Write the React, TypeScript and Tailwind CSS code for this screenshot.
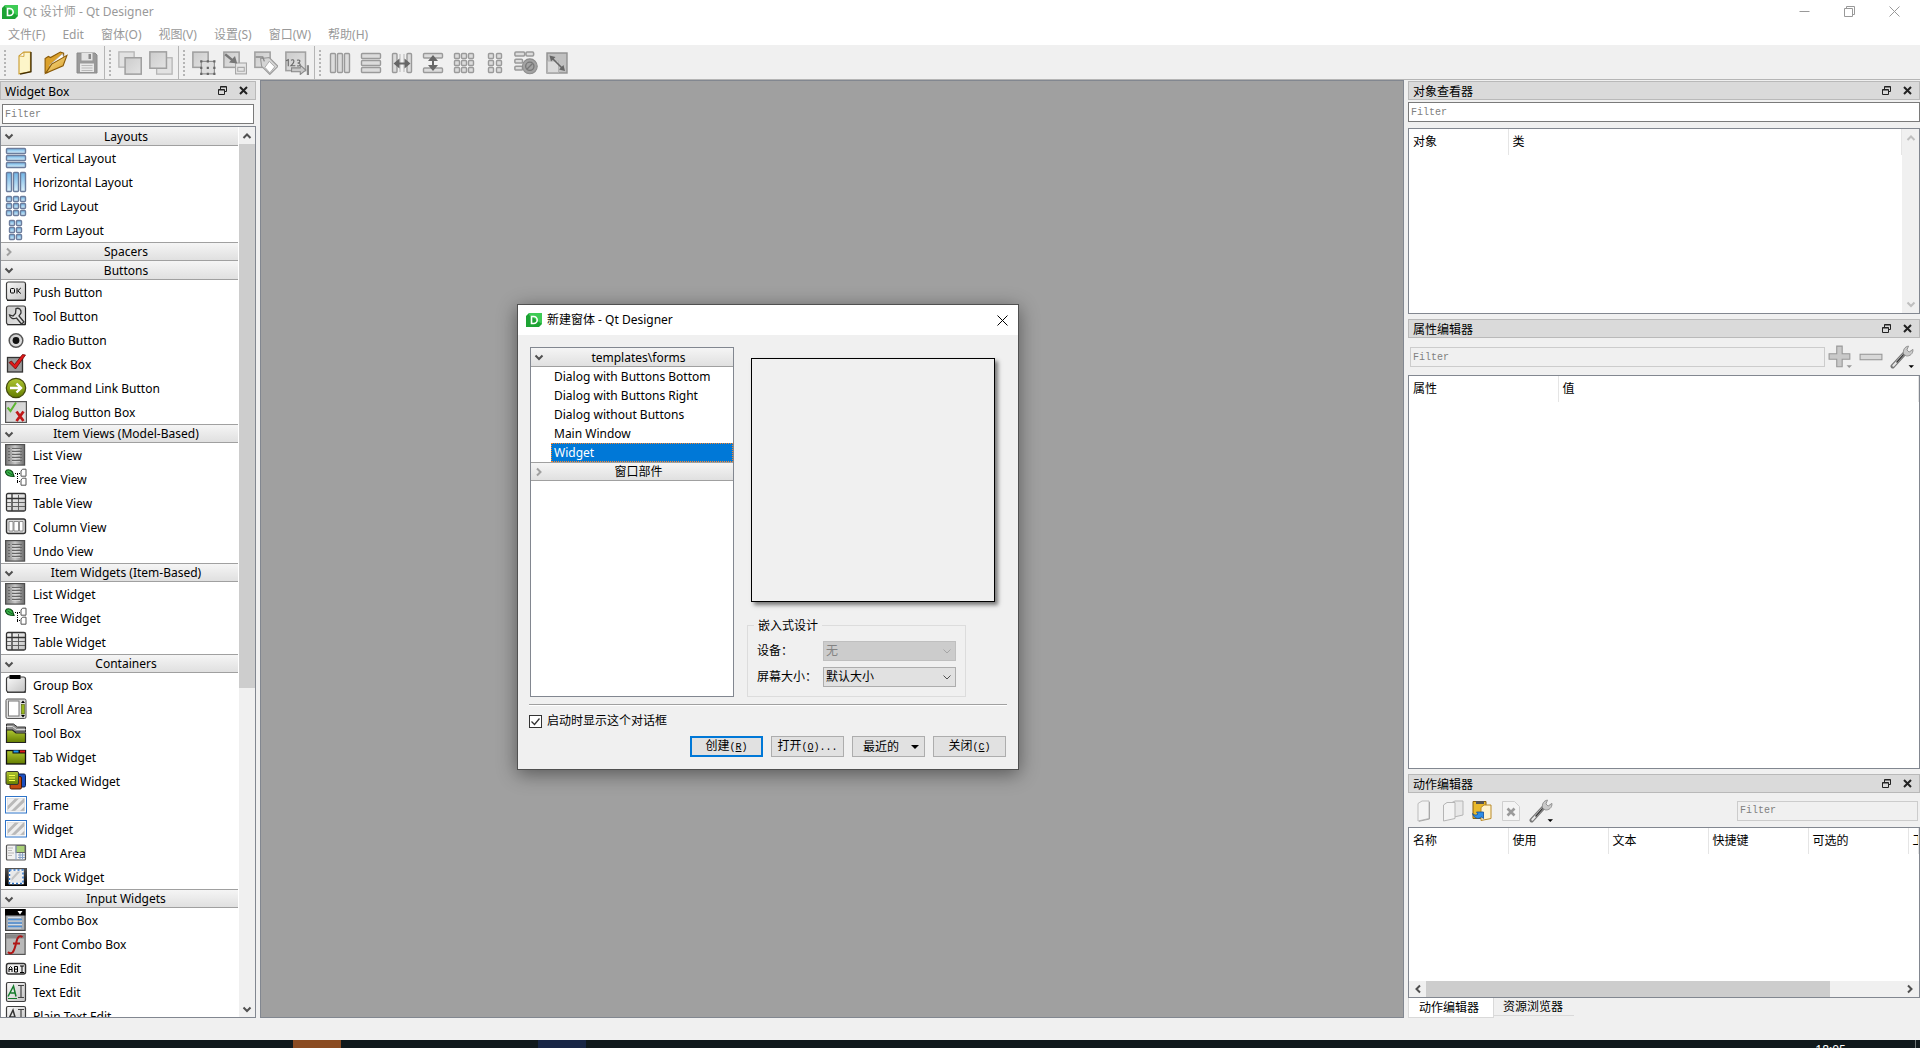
import type { ReactNode } from "react";

type IconProps = { children: ReactNode; className?: string };

function Icon({ children, className = "h-[22px] w-[22px] shrink-0" }: IconProps) {
  return (
    <svg viewBox="0 0 22 22" fill="none" className={className} aria-hidden="true">
      {children}
    </svg>
  );
}

/* Gradients shared by every icon */
function IconDefs() {
  return (
    <svg className="absolute h-0 w-0" aria-hidden="true">
      <defs>
        <linearGradient id="blue" x1="0" y1="0" x2="0" y2="1">
          <stop offset="0" stopColor="#6fb4e6" />
          <stop offset="1" stopColor="#dcf1fb" />
        </linearGradient>
        <linearGradient id="silver" x1="0" y1="0" x2="1" y2="1">
          <stop offset="0" stopColor="#fafafa" />
          <stop offset="1" stopColor="#c3c3c3" />
        </linearGradient>
        <linearGradient id="steel" x1="0" y1="0" x2="1" y2="0">
          <stop offset="0" stopColor="#777777" />
          <stop offset="0.5" stopColor="#c8c8c8" />
          <stop offset="1" stopColor="#6b6b6b" />
        </linearGradient>
        <linearGradient id="gold" x1="0" y1="0" x2="1" y2="1">
          <stop offset="0" stopColor="#fbe294" />
          <stop offset="1" stopColor="#d79b22" />
        </linearGradient>
        <linearGradient id="lime" x1="0" y1="0" x2="0" y2="1">
          <stop offset="0" stopColor="#b0c832" />
          <stop offset="1" stopColor="#647d00" />
        </linearGradient>
        <linearGradient id="flat" x1="0" y1="0" x2="1" y2="1">
          <stop offset="0" stopColor="#cccccc" />
          <stop offset="1" stopColor="#e3e3e3" />
        </linearGradient>
        <linearGradient id="night" x1="0" y1="0" x2="0" y2="1">
          <stop offset="0" stopColor="#555555" />
          <stop offset="1" stopColor="#000000" />
        </linearGradient>
      </defs>
    </svg>
  );
}

const blueCell = { fill: "url(#blue)", stroke: "#6b7c9c", strokeWidth: 1.4 };
const grayCell = { fill: "#dcdcdc", stroke: "#9a9a9a", strokeWidth: 1.4 };
const button3d = { fill: "url(#silver)", stroke: "#3d3d3d", strokeWidth: 1.2 };

type Cell = typeof blueCell;

function rowsOf(cell: Cell) {
  return [1.5, 8.5, 15.5].map((y) => (
    <rect key={y} x="1.5" y={y} width="19" height="5" rx="1" {...cell} />
  ));
}

function columnsOf(cell: Cell) {
  return [1.5, 8.5, 15.5].map((x) => (
    <rect key={x} x={x} y="1.5" width="5" height="19" rx="1" {...cell} />
  ));
}

function cellsOf(cell: Cell, xs: number[]) {
  return xs.map((x) =>
    [1.5, 8.5, 15.5].map((y) => (
      <rect key={`${x}-${y}`} x={x} y={y} width="5" height="5" rx="1" {...cell} />
    )),
  );
}

const listIcon = (
  <Icon>
    <rect x="0.6" y="0.6" width="19" height="20.5" fill="url(#steel)" stroke="#4f4f4f" strokeWidth="1.2" />
    <path d="M3 4.5h2M7 4.5h10M3 7.5h2M7 7.5h10M3 10.5h2M7 10.5h10M3 13.5h2M7 13.5h10M3 16.5h2M7 16.5h10" stroke="#666" />
    <path d="M7 5.5h8M7 8.5h8M7 11.5h8M7 14.5h8M7 17.5h8" stroke="#ddd" strokeWidth="0.7" />
  </Icon>
);

const treeIcon = (
  <Icon>
    <path d="M0.5 4C1 1 5 1 7.5 4L9 8.500C5 8.500 1 7.500 0.500 4z" fill="#39b54a" stroke="#0d4d16" strokeWidth="1.2" />
    <path d="M2.5 4l5 3" stroke="#0d4d16" strokeWidth="0.8" />
    <path d="M10 5.5h5M12.5 6v9.500M12 13.5h3" stroke="#000" strokeDasharray="1 1" />
    <path d="M17.5 1.2h3.500v7h-5V3z" fill="#fff" stroke="#555" />
    <path d="M17.5 10.2h3.500v7h-5v-5.200z" fill="#fff" stroke="#555" />
  </Icon>
);

const tableIcon = (
  <Icon>
    <rect x="1.5" y="1.5" width="19" height="17.5" rx="1.5" fill="url(#silver)" stroke="#333" strokeWidth="1.3" />
    <path d="M2 6.5h18M7 2v17" stroke="#333" strokeWidth="1.3" />
    <path d="M7 10.5h13M7 14.5h13M13.5 7v12M2 10.5h4M2 14.5h4M13.5 3v3" stroke="#555" strokeWidth="0.9" />
  </Icon>
);

const frameIcon = (
  <Icon>
    <rect x="0.5" y="2.5" width="21" height="16.5" fill="#fff" stroke="#2f74c8" />
    <rect x="2.5" y="4.5" width="17" height="12.5" fill="#efefef" />
    <path d="M2.5 12l7.500-7.500h4L2.500 16zM6 17L18.500 4.500h1V8L10 17zM15 17l4.500-4.500V17z" fill="#b9b9b9" />
    <rect x="2.5" y="4.5" width="17" height="12.5" stroke="#d0d0d0" strokeWidth="0.5" />
  </Icon>
);

const widgetIcons: Record<string, ReactNode> = {
  "Vertical Layout": <Icon>{rowsOf(blueCell)}</Icon>,
  "Horizontal Layout": <Icon>{columnsOf(blueCell)}</Icon>,
  "Grid Layout": <Icon>{cellsOf(blueCell, [1.5, 8.5, 15.5])}</Icon>,
  "Form Layout": <Icon>{cellsOf(blueCell, [4.5, 11.5])}</Icon>,
  "Push Button": (
    <Icon>
      <rect x="1.5" y="1" width="19" height="18" rx="2" {...button3d} />
      <path d="M2 19.5h18.500V3" stroke="#222" />
      <rect x="5.5" y="7.5" width="4" height="4.5" rx="1" stroke="#000" />
      <path d="M12 7v5.500M15.800 7l-3 2.800 3 2.700" stroke="#000" />
    </Icon>
  ),
  "Tool Button": (
    <Icon>
      <rect x="1.5" y="1" width="19" height="18.5" rx="2" fill="url(#flat)" stroke="#3d3d3d" strokeWidth="1.2" />
      <path d="M2 19.800h18.500V3" stroke="#222" />
      <path d="M11 3.500c3-1 5.500 1 5 4.500l-2 3 5 6-2.500 2-5-6c-3 1.500-6.500.5-7-3l3.500 1 2.500-2.500z" fill="#dedede" stroke="#333" strokeWidth="1.300" />
    </Icon>
  ),
  "Radio Button": (
    <Icon>
      <circle cx="11" cy="11.500" r="6.800" fill="url(#flat)" stroke="#555" strokeWidth="1.500" />
      <circle cx="11" cy="11.500" r="3.400" fill="#111" />
    </Icon>
  ),
  "Check Box": (
    <Icon>
      <rect x="2.500" y="4.500" width="15" height="14.500" fill="#9b9b9b" stroke="#333" strokeWidth="1.300" />
      <path d="M4 9.500l2.500-1.500 3 3.500L17.500 1.500l3 .5L10.500 16z" fill="#e01919" stroke="#6e0707" strokeWidth="0.800" />
    </Icon>
  ),
  "Command Link Button": (
    <Icon>
      <circle cx="11" cy="11" r="9.700" fill="url(#lime)" stroke="#42490d" strokeWidth="1.200" />
      <path d="M5 11h11M11.500 6.500L16 11l-4.500 4.500" stroke="#fff" strokeWidth="2.400" />
    </Icon>
  ),
  "Dialog Button Box": (
    <Icon>
      <rect x="0.600" y="0.600" width="20.800" height="20.800" fill="url(#flat)" stroke="#555" strokeWidth="1.200" />
      <path d="M2.500 6.500l3 3.500L11 1.500" stroke="#5cb531" strokeWidth="2" />
      <path d="M11.500 10.500l7 9.500M18.500 10.500l-7 9.500" stroke="#c01818" strokeWidth="2.800" />
    </Icon>
  ),
  "List View": listIcon,
  "List Widget": listIcon,
  "Undo View": listIcon,
  "Tree View": treeIcon,
  "Tree Widget": treeIcon,
  "Table View": tableIcon,
  "Table Widget": tableIcon,
  "Column View": (
    <Icon>
      <rect x="1.500" y="3" width="19" height="14.500" rx="2" fill="#ddd" stroke="#333" strokeWidth="1.400" />
      <path d="M4 5.500h4v9.500H4zM9 5.500h4.500v9.500H9zM14.500 5.500h3.500v9.500h-3.500z" fill="#fff" stroke="#777" strokeWidth="0.800" />
    </Icon>
  ),
  "Group Box": (
    <Icon>
      <rect x="1.500" y="3" width="19" height="15" rx="2" {...button3d} />
      <path d="M2 18.500h18.500V5" stroke="#444" />
      <rect x="4.500" y="1" width="11" height="4" fill="#000" />
    </Icon>
  ),
  "Scroll Area": (
    <Icon>
      <rect x="1" y="1" width="20" height="19.500" rx="1.500" fill="#ddd" stroke="#555" />
      <rect x="3.500" y="3" width="10.500" height="15" fill="#fff" stroke="#777" />
      <rect x="16.500" y="6.500" width="2.800" height="9.500" fill="#98b61c" stroke="#4a5c00" strokeWidth="0.600" />
      <path d="M16 5l2-2.500L20 5zM16 17l2 2.500 2-2.500z" fill="#000" />
    </Icon>
  ),
  "Tool Box": (
    <Icon>
      <path d="M1.500 2h7l4 3h8v5h-19z" fill="#8d8d8d" stroke="#333" />
      <path d="M1.500 4.500h6l4 3h9" stroke="#ddd" />
      <path d="M1.500 8h6l3.500 3h9.500v9.500h-19z" fill="url(#lime)" stroke="#222" strokeWidth="1.200" />
    </Icon>
  ),
  "Tab Widget": (
    <Icon>
      <rect x="1.500" y="4.500" width="19" height="13.500" fill="url(#lime)" stroke="#111" strokeWidth="1.300" />
      <rect x="7.500" y="4" width="13" height="3.500" fill="#111" />
      <rect x="8.500" y="4.500" width="5" height="2" fill="#1c9bf0" />
      <rect x="15" y="4.500" width="5" height="2" fill="#e01b1b" />
    </Icon>
  ),
  "Stacked Widget": (
    <Icon>
      <rect x="8" y="4" width="12.500" height="13" rx="1.500" fill="#1c4fc0" stroke="#0a2050" />
      <rect x="5" y="6.500" width="11.500" height="12.500" rx="1.500" fill="#c24a12" stroke="#4c1a00" />
      <rect x="1" y="1.500" width="12.500" height="13" rx="1.500" fill="url(#lime)" stroke="#333" />
      <path d="M4 5.500h6M4 8h6M4 10.500h6" stroke="#f7ff4d" strokeWidth="1.200" />
    </Icon>
  ),
  Frame: frameIcon,
  Widget: frameIcon,
  "MDI Area": (
    <Icon>
      <rect x="1.500" y="3" width="19" height="15" rx="1" fill="#f2f2f2" stroke="#555" strokeWidth="1.200" />
      <rect x="11" y="3.500" width="9" height="7" fill="#a9d077" stroke="#666" />
      <path d="M11 3.500V18M13 13h7M13 15.500h7M15 11v7M17.500 11v7" stroke="#8aa4c8" />
      <path d="M3 6h5M3 8.500h4M3 11h6M3 13.500h4" stroke="#aaa" strokeWidth="0.800" />
    </Icon>
  ),
  "Dock Widget": (
    <Icon>
      <rect x="0" y="2" width="22" height="18" fill="url(#night)" />
      <rect x="4.500" y="4" width="13.500" height="13.500" fill="#e9e9e9" stroke="#fff" strokeWidth="1.500" />
      <rect x="4.500" y="4" width="13.500" height="13.500" stroke="#2f74c8" strokeWidth="1.500" strokeDasharray="2 2" />
      <path d="M6.500 12l6-6.500h3l-9 9.500z" fill="#c4c4c4" />
    </Icon>
  ),
  "Combo Box": (
    <Icon>
      <rect x="0.600" y="0.600" width="19.500" height="20.800" fill="#a9adb2" stroke="#444" strokeWidth="1.200" />
      <rect x="0" y="0" width="20.500" height="6.500" fill="#000" />
      <path d="M12.500 2h5L15 5.500z" fill="#fff" />
      <path d="M3 8.500h13M3 12h14M3 15.500h14M3 19h13" stroke="#cfdbe8" />
      <path d="M3 10.500h14M3 14h14M3 17.500h14" stroke="#4d8fd6" strokeWidth="1.500" />
    </Icon>
  ),
  "Font Combo Box": (
    <Icon>
      <rect x="0.600" y="0.600" width="19.500" height="20.800" fill="#b9b9b9" stroke="#555" strokeWidth="1.200" />
      <path d="M1 3.500h18.500" stroke="#888" strokeWidth="4" />
      <path d="M17.500 4c-3-2-5 0-6 4.500s-2 9-4 11c-1.500 1-3.500.5-4.500-.5M8 10.500h7" stroke="#b01616" strokeWidth="2" />
    </Icon>
  ),
  "Line Edit": (
    <Icon>
      <rect x="1.500" y="6.500" width="19" height="10.500" rx="2" fill="#eee" stroke="#333" strokeWidth="1.500" />
      <path d="M4 15v-4l1.500-1.500L7 11v4M4 12.500h3M9.500 15V9.500h3v5.500zM9.500 12.200h3M15 9h4M17 9v6.500M15 15.500h4" stroke="#000" />
    </Icon>
  ),
  "Text Edit": (
    <Icon>
      <rect x="1.500" y="1.500" width="19" height="19" rx="1.500" {...button3d} />
      <path d="M3 15.500L8.500 5l2.500 10.500M5.500 12h5" stroke="#147a2b" strokeWidth="1.500" />
      <path d="M3 17.500h9" stroke="#147a2b" />
      <path d="M13 4.500h6M16 4.500v12M13 16.500h6" stroke="#444" strokeWidth="1.200" />
    </Icon>
  ),
  "Plain Text Edit": (
    <Icon>
      <rect x="1.500" y="1.500" width="19" height="19" rx="1.500" {...button3d} />
      <path d="M3 15.500L8 5l3 10.500M5.500 12h5" stroke="#333" strokeWidth="1.500" />
      <path d="M13 4.500h6M16 4.500v12M13 16.500h6" stroke="#444" strokeWidth="1.200" />
    </Icon>
  ),
};

const categories = [
  {
    name: "Layouts",
    items: ["Vertical Layout", "Horizontal Layout", "Grid Layout", "Form Layout"],
  },
  { name: "Spacers", items: [] },
  {
    name: "Buttons",
    items: [
      "Push Button",
      "Tool Button",
      "Radio Button",
      "Check Box",
      "Command Link Button",
      "Dialog Button Box",
    ],
  },
  {
    name: "Item Views (Model-Based)",
    items: ["List View", "Tree View", "Table View", "Column View", "Undo View"],
  },
  {
    name: "Item Widgets (Item-Based)",
    items: ["List Widget", "Tree Widget", "Table Widget"],
  },
  {
    name: "Containers",
    items: [
      "Group Box",
      "Scroll Area",
      "Tool Box",
      "Tab Widget",
      "Stacked Widget",
      "Frame",
      "Widget",
      "MDI Area",
      "Dock Widget",
    ],
  },
  {
    name: "Input Widgets",
    items: ["Combo Box", "Font Combo Box", "Line Edit", "Text Edit", "Plain Text Edit"],
  },
];

const menus = ["文件(F)", "Edit", "窗体(O)", "视图(V)", "设置(S)", "窗口(W)", "帮助(H)"];

const plate = { fill: "url(#flat)", stroke: "#a0a0a0", strokeWidth: 1.4 };

const toolGroups: { label: string; icon: ReactNode }[][] = [
  [
    {
      label: "New",
      icon: (
        <Icon className="h-6 w-6 shrink-0">
          <path d="M5.500 4.500L10 1h6v18l-10.500 2z" fill="#fdf5c9" stroke="#c99a2b" />
          <path d="M16.500 1v18l-10 2.300" stroke="#3f2d05" strokeWidth="1.200" />
          <path d="M5.500 4.500l4.500.5V1z" fill="#fff" stroke="#c99a2b" strokeWidth="0.800" />
        </Icon>
      ),
    },
    {
      label: "Open",
      icon: (
        <Icon className="h-6 w-6 shrink-0">
          <path d="M1 20V7l3-2 2 1 9-5 3 1v4L3 20z" fill="#dba12c" stroke="#8a5a08" />
          <path d="M5 13L17 2.500l1.500 5L7 17z" fill="#fff" stroke="#aaa" strokeWidth="0.600" />
          <path d="M1.500 20.500L7 12l14-8-3.500 9.500z" fill="url(#gold)" stroke="#8a5a08" />
        </Icon>
      ),
    },
    {
      label: "Save",
      icon: (
        <Icon>
          <path d="M1 1h18l2 2v18H1z" fill="#9a9a9a" stroke="#8a8a8a" />
          <rect x="5.500" y="1" width="11" height="7.500" fill="#e4e4e4" />
          <rect x="12.500" y="2" width="2.500" height="5" fill="#8a8a8a" />
          <rect x="4" y="11.500" width="14" height="8.500" fill="#e8e8e8" />
          <path d="M5.500 13.500h11M5.500 16h11M5.500 18.500h11" stroke="#b9b9b9" />
        </Icon>
      ),
    },
  ],
  [
    {
      label: "Send to Back",
      icon: (
        <Icon className="h-6 w-6 shrink-0">
          <rect x="0.800" y="0.800" width="14" height="14" fill="#e2e2e2" stroke="#b5b5b5" strokeWidth="1.200" />
          <rect x="6.500" y="6.200" width="14.800" height="15" {...plate} />
        </Icon>
      ),
    },
    {
      label: "Bring to Front",
      icon: (
        <Icon className="h-6 w-6 shrink-0">
          <rect x="7" y="6.200" width="14.200" height="15" fill="#e2e2e2" stroke="#b5b5b5" strokeWidth="1.200" />
          <rect x="0.800" y="0.800" width="15.200" height="15" {...plate} />
        </Icon>
      ),
    },
  ],
  [
    {
      label: "Edit Widgets",
      icon: (
        <Icon className="h-6 w-6 shrink-0">
          <rect x="0.800" y="1" width="14" height="14" {...plate} />
          <rect x="8.500" y="9.500" width="12" height="11.500" fill="#dedede" stroke="#8a8a8a" />
          <path d="M7.500 8.500h2v2h-2zM13.500 8.500h2v2h-2zM19.500 8.500h2v2h-2zM7.500 14.500h2v2h-2zM13.500 14.500h2v2h-2zM19.500 14.500h2v2h-2zM7.500 20h2v2h-2zM13.500 20h2v2h-2zM19.500 20h2v2h-2z" fill="#666" />
        </Icon>
      ),
    },
    {
      label: "Edit Signals/Slots",
      icon: (
        <Icon className="h-6 w-6 shrink-0">
          <rect x="0.800" y="1" width="14" height="14" {...plate} />
          <rect x="11.500" y="11" width="10" height="10" fill="#e6e6e6" stroke="#a6a6a6" />
          <path d="M13.500 15h6v3.500h-6z" stroke="#aaa" />
          <path d="M2 3l8 6.500" stroke="#777" strokeWidth="2.200" />
          <path d="M13 11.500L5.500 10.500 11 4.500z" fill="#777" />
        </Icon>
      ),
    },
    {
      label: "Edit Buddies",
      icon: (
        <Icon className="h-6 w-6 shrink-0">
          <rect x="0.800" y="1" width="14" height="14" {...plate} />
          <path d="M6 7l8-1 8 8-7.500 7.500L7 14z" fill="#d5d5d5" stroke="#999" />
          <path d="M14 9.500l5 5-4.500 5.500L10 15z" fill="#fff" stroke="#999" strokeWidth="0.700" />
          <path d="M1.500 5.500h6.500l1.500 4" stroke="#888" strokeWidth="1.200" />
        </Icon>
      ),
    },
    {
      label: "Edit Tab Order",
      icon: (
        <Icon className="h-6 w-6 shrink-0">
          <rect x="0.800" y="1" width="18" height="17" {...plate} />
          <path d="M1 9l2-1v6M5.500 8.500c3-1.500 4 1 0 5h4M11 8.500c4-1 3 2.500.5 2.500 3.500 0 3 3.500-.5 2.500" stroke="#666" />
          <path d="M6 15.500h8V13l5 4.500-5 4v-2.500H6z" fill="#c9c9c9" stroke="#888" />
          <path d="M21 13v9" stroke="#888" strokeWidth="2" />
        </Icon>
      ),
    },
  ],
  [
    { label: "Lay Out Horizontally", icon: <Icon>{columnsOf(grayCell)}</Icon> },
    { label: "Lay Out Vertically", icon: <Icon>{rowsOf(grayCell)}</Icon> },
    {
      label: "Lay Out Horizontally in Splitter",
      icon: (
        <Icon>
          <rect x="1.500" y="1.500" width="4.500" height="19" rx="1" {...grayCell} />
          <rect x="16" y="1.500" width="4.500" height="19" rx="1" {...grayCell} />
          <path d="M9 2v18M13 2v18" stroke="#b5b5b5" />
          <path d="M5 11.500h12" stroke="#666" strokeWidth="2" />
          <path d="M2.500 11.500l6-5v10zM19.500 11.500l-6-5v10z" fill="#666" />
        </Icon>
      ),
    },
    {
      label: "Lay Out Vertically in Splitter",
      icon: (
        <Icon>
          <rect x="1.500" y="1.500" width="19" height="4.500" rx="1" {...grayCell} />
          <rect x="1.500" y="16" width="19" height="4.500" rx="1" {...grayCell} />
          <path d="M11 6v11" stroke="#666" strokeWidth="2" />
          <path d="M11 3l-5 6h10zM11 19l-5-6h10z" fill="#666" />
        </Icon>
      ),
    },
    { label: "Lay Out in a Grid", icon: <Icon>{cellsOf(grayCell, [1.5, 8.5, 15.5])}</Icon> },
    { label: "Lay Out in a Form Layout", icon: <Icon>{cellsOf(grayCell, [4.5, 12.5])}</Icon> },
    {
      label: "Break Layout",
      icon: (
        <Icon className="h-6 w-6 shrink-0">
          <rect x="0.800" y="1" width="9" height="3.500" rx="1" {...grayCell} />
          <rect x="11" y="1" width="7" height="3.500" rx="1" {...grayCell} />
          <rect x="0.800" y="7.500" width="7" height="3.500" rx="1" {...grayCell} />
          <rect x="0.800" y="14" width="7" height="3.500" rx="1" {...grayCell} />
          <circle cx="14.500" cy="14" r="6.800" fill="#a2a2a2" stroke="#8c8c8c" />
          <circle cx="14.500" cy="14" r="3.800" stroke="#777" strokeWidth="1.200" />
          <path d="M12 16.500l5-5" stroke="#777" strokeWidth="1.200" />
        </Icon>
      ),
    },
    {
      label: "Adjust Size",
      icon: (
        <Icon>
          <rect x="1" y="1" width="20" height="20" fill="#c0c0c0" stroke="#909090" strokeWidth="1.400" />
          <rect x="1.500" y="9" width="11" height="11.500" fill="#dadada" stroke="#b3b3b3" />
          <path d="M6 6l10.500 10.500" stroke="#666" strokeWidth="1.600" />
          <path d="M3.500 3.500l6 1.500-4.500 4.500zM19 19l-6-1.500 4.500-4.500z" fill="#666" />
        </Icon>
      ),
    },
  ],
];

function AppIcon() {
  return (
    <svg viewBox="0 0 16 16" className="h-4 w-4 shrink-0" aria-hidden="true">
      <path d="M3 1h13v11l-3 3H0V4z" fill="#1da334" />
      <path d="M3 1h13v11L3 3z" fill="#3ecb55" />
      <path d="M5.500 4.500h2.200a3.400 3.400 0 010 7H5.500z" fill="none" stroke="#fff" strokeWidth="1.600" />
    </svg>
  );
}

const chevronPaths = {
  up: "M1.500 7L5 3.500 8.500 7",
  down: "M1.500 3.500L5 7l3.500-3.500",
  left: "M7 1.500L3.500 5 7 8.500",
  right: "M3 1.500L6.500 5 3 8.500",
};

type ChevronProps = {
  direction: keyof typeof chevronPaths;
  className?: string;
  weight?: number;
};

function Chevron({ direction, className = "text-[#505050]", weight = 2 }: ChevronProps) {
  return (
    <svg viewBox="0 0 10 10" className={`h-[10px] w-[10px] shrink-0 ${className}`} aria-hidden="true">
      <path d={chevronPaths[direction]} fill="none" stroke="currentColor" strokeWidth={weight} />
    </svg>
  );
}

function DockTitle({ title }: { title: string }) {
  return (
    <div className="flex h-[19px] shrink-0 items-center border border-[#b9b9b9] bg-[#dadada] pr-[7px] pl-1">
      <h2 className="flex-1 pt-[2px] leading-4">{title}</h2>
      <button aria-label="Float" className="mr-3 flex">
        <svg viewBox="0 0 9 9" className="h-[9px] w-[9px]" fill="none" stroke="#222">
          <path d="M2.500 3V.5h6v5H6.500M2.500 1h6M.5 3.500h6v5h-6zM.5 4h6" />
        </svg>
      </button>
      <button aria-label="Close" className="flex">
        <svg viewBox="0 0 9 9" className="h-[9px] w-[9px]" stroke="#222" strokeWidth="2">
          <path d="M1 1l7 7M8 1L1 8" />
        </svg>
      </button>
    </div>
  );
}

function CategoryHeader({ name, open, line }: { name: string; open: boolean; line: boolean }) {
  return (
    <button
      className={`flex h-[19px] w-full items-center border-b border-[#a0a0a0] bg-linear-to-b from-[#f5f5f5] to-[#e0e0e0] pl-[3px] ${
        line ? "border-t" : ""
      }`}
    >
      <Chevron direction={open ? "down" : "right"} className={open ? "text-[#505050]" : "text-[#a0a0a0]"} />
      <span className="flex-1 pt-px leading-4">{name}</span>
    </button>
  );
}

function WidgetBox() {
  return (
    <aside className="flex w-64 shrink-0 flex-col pt-px">
      <DockTitle title="Widget Box" />
      <input
        aria-label="Filter widgets"
        placeholder="Filter"
        className="mx-[2px] mt-1 h-5 shrink-0 border border-[#7a7a7a] bg-white px-[2px] font-['Liberation_Mono',monospace] text-[10px] placeholder:text-[#808080]"
      />
      <div className="mt-[2px] flex min-h-0 flex-1 border border-[#828790] bg-white">
        <div className="min-w-0 flex-1 overflow-hidden">
          {categories.map((category, index) => (
            <section key={category.name}>
              <CategoryHeader
                name={category.name}
                open={category.items.length > 0}
                line={index > 0 && categories[index - 1].items.length > 0}
              />
              <ul>
                {category.items.map((item) => (
                  <li key={item} className="flex h-6 items-center gap-[6px] pl-1">
                    {widgetIcons[item]}
                    <span className="pt-[2px]">{item}</span>
                  </li>
                ))}
              </ul>
            </section>
          ))}
        </div>
        <div className="ml-px flex w-4 shrink-0 flex-col items-center bg-[#f0f0f0]">
          <div className="flex h-[17px] items-center">
            <Chevron direction="up" />
          </div>
          <div className="flex w-full flex-1 flex-col">
            <div className="w-full flex-[544] bg-[#cdcdcd]" />
            <div className="flex-[312]" />
          </div>
          <div className="flex h-[17px] items-center">
            <Chevron direction="down" />
          </div>
        </div>
      </div>
    </aside>
  );
}

function HeaderTable({ columns, widths }: { columns: string[]; widths: string[] }) {
  return (
    <table className="w-full table-fixed border-collapse">
      <thead>
        <tr className="h-[26px]">
          {columns.map((column, index) => (
            <th
              key={column}
              className={`overflow-hidden border-r border-[#e5e5e5] pl-1 text-left font-normal whitespace-nowrap ${widths[index]}`}
            >
              {column}
            </th>
          ))}
        </tr>
      </thead>
    </table>
  );
}

function Wrench() {
  return (
    <Icon className="h-6 w-6 shrink-0">
      <path d="M2.500 19.500L14 7" stroke="#777" strokeWidth="4" strokeLinecap="round" />
      <path d="M3 19L13.500 7.500" stroke="#e8e8e8" strokeWidth="1.800" strokeLinecap="round" />
      <path d="M6 16l7-8" stroke="#333" strokeWidth="1.200" />
      <path d="M12.500 8.500c-1-4 1-7 4.500-7.500l-1.500 3.500 2 2L21 4c.5 4-3 6.500-6 6z" fill="#c9c9c9" stroke="#8a8a8a" strokeWidth="0.800" />
      <path d="M17 18.500h5L19.500 21z" fill="#000" />
    </Icon>
  );
}

const actionTools = [
  {
    label: "New action",
    icon: (
      <Icon>
        <path d="M5 3.500L9 1h7v17.500L5 21z" fill="#f3f3f3" stroke="#bdbdbd" />
        <path d="M16.500 2v17L6 21.300" stroke="#a8a8a8" />
      </Icon>
    ),
  },
  {
    label: "Copy",
    icon: (
      <Icon>
        <path d="M10 2.500L13 1h8v14l-9 2z" fill="#e8e8e8" stroke="#b5b5b5" />
        <path d="M1.500 5L5 2.500h8v16L1.500 21z" fill="#f3f3f3" stroke="#b5b5b5" />
      </Icon>
    ),
  },
  {
    label: "Paste",
    icon: (
      <Icon>
        <path d="M2 1.500h13v17H2z" fill="#e9b92c" stroke="#8a5f08" />
        <path d="M5 1h8v3H5z" fill="#555" />
        <path d="M10 7.500L13 5h7v13.500L10 20.500z" fill="#fff3cf" stroke="#b98a28" />
        <path d="M1.500 13.500c1.500 2 4 2 5.500.5l-1.500-2h7v6.500l-2-1.500c-3 3-8 1-9-3.500z" fill="#2f8de6" stroke="#0f4e9a" strokeWidth="0.800" />
      </Icon>
    ),
  },
  {
    label: "Delete",
    icon: (
      <Icon>
        <path d="M2.500 1.500h12l5 5v14h-17z" fill="#f4f4f4" stroke="#cfcfcf" />
        <path d="M7.500 8.500l7 7M14.500 8.500l-7 7" stroke="#9a9a9a" strokeWidth="2.600" />
      </Icon>
    ),
  },
  { label: "Configure", icon: <Wrench /> },
];

function RightDocks() {
  return (
    <aside className="flex w-[512px] shrink-0 flex-col pt-px">
      {/* 对象查看器 */}
      <DockTitle title="对象查看器" />
      <input
        aria-label="Filter objects"
        placeholder="Filter"
        className="mt-[2px] h-5 shrink-0 border border-[#7a7a7a] bg-white px-[2px] font-['Liberation_Mono',monospace] text-[10px] placeholder:text-[#808080]"
      />
      <div className="mt-[6px] flex h-[186px] shrink-0 border border-[#828790] bg-white">
        <div className="min-w-0 flex-1">
          <HeaderTable columns={["对象", "类"]} widths={["w-[99px]", ""]} />
        </div>
        <div className="flex w-[17px] flex-col items-center justify-between bg-[#f0f0f0] py-1">
          <Chevron direction="up" className="text-[#bfbfbf]" />
          <Chevron direction="down" className="text-[#bfbfbf]" />
        </div>
      </div>

      {/* 属性编辑器 */}
      <div className="mt-[5px] flex min-h-0 flex-1 flex-col">
        <DockTitle title="属性编辑器" />
        <div className="flex h-[37px] shrink-0 items-center pt-px pr-[6px] pl-[2px]">
          <input
            aria-label="Filter properties"
            placeholder="Filter"
            disabled
            className="h-5 min-w-0 flex-1 border border-[#cccccc] bg-[#f0f0f0] px-[2px] font-['Liberation_Mono',monospace] text-[10px] placeholder:text-[#808080]"
          />
          <div className="flex items-center gap-[7px] pl-[3px]">
            <button aria-label="Add property">
              <Icon className="h-6 w-6 shrink-0">
                <path d="M8 1h5v7h7v5h-7v7H8v-7H1V8h7z" fill="#c9c9c9" stroke="#999" />
                <path d="M17 18.500h5L19.500 21z" fill="#999" />
              </Icon>
            </button>
            <button aria-label="Remove property">
              <Icon className="h-6 w-6 shrink-0">
                <rect x="1" y="8.500" width="20" height="5" fill="#d8d8d8" stroke="#999" />
              </Icon>
            </button>
            <button aria-label="Configure properties">
              <Wrench />
            </button>
          </div>
        </div>
        <div className="min-h-0 flex-1 border border-[#828790] bg-white">
          <HeaderTable columns={["属性", "值"]} widths={["w-[149px]", ""]} />
        </div>
      </div>

      {/* 动作编辑器 */}
      <div className="mt-[5px] shrink-0">
        <DockTitle title="动作编辑器" />
        <div className="flex h-[34px] items-center pt-px pr-[2px] pl-[5px]">
          <div className="flex flex-1 gap-[7px]">
            {actionTools.map((tool) => (
              <button key={tool.label} aria-label={tool.label}>
                {tool.icon}
              </button>
            ))}
          </div>
          <input
            aria-label="Filter actions"
            placeholder="Filter"
            disabled
            className="h-5 w-[181px] border border-[#cccccc] bg-[#f0f0f0] px-[2px] font-['Liberation_Mono',monospace] text-[10px] placeholder:text-[#808080]"
          />
        </div>
        <div className="flex h-[171px] flex-col border border-[#828790] bg-white">
          <div className="flex-1">
            <HeaderTable
              columns={["名称", "使用", "文本", "快捷键", "可选的", "工具提示"]}
              widths={["w-[99px]", "w-[100px]", "w-[100px]", "w-[100px]", "w-[100px]", ""]}
            />
          </div>
          <div className="flex h-4 items-center bg-[#f0f0f0] px-1">
            <Chevron direction="left" />
            <div className="mx-[3px] flex flex-1 self-stretch">
              <div className="flex-[404] bg-[#cdcdcd]" />
              <div className="flex-[72]" />
            </div>
            <Chevron direction="right" />
          </div>
        </div>
        <div className="flex h-5 items-start">
          <button className="h-5 w-[86px] border border-t-0 border-[#d9d9d9] bg-white pt-px pr-1">动作编辑器</button>
          <button className="h-[18px] w-20 border-b border-[#d9d9d9] pr-[2px]">资源浏览器</button>
        </div>
      </div>
    </aside>
  );
}

const templates = [
  "Dialog with Buttons Bottom",
  "Dialog with Buttons Right",
  "Dialog without Buttons",
  "Main Window",
  "Widget",
];

function Mnemonic({ letter, suffix = "" }: { letter: string; suffix?: string }) {
  return (
    <span className="font-['Liberation_Mono',monospace] text-[10px]">
      (<u>{letter}</u>){suffix}
    </span>
  );
}

function NewFormDialog() {
  return (
    <div
      role="dialog"
      aria-label="新建窗体"
      className="absolute top-[223px] left-[256px] w-[502px] border border-[#505050] bg-[#f0f0f0] shadow-[0_4px_18px_rgba(0,0,0,0.45)]"
    >
      <header className="flex h-[30px] items-center bg-white pr-[10px] pl-2">
        <AppIcon />
        <h1 className="flex-1 pl-[5px]">新建窗体 - Qt Designer</h1>
        <button aria-label="Close">
          <svg viewBox="0 0 11 11" className="h-[11px] w-[11px]" stroke="#000">
            <path d="M.5 .5l10 10M10.500 .5l-10 10" />
          </svg>
        </button>
      </header>

      <div className="px-[11px] pt-3 pb-3">
        <div className="flex pl-px">
          {/* Template tree */}
          <div className="h-[350px] w-[204px] border border-[#828790] bg-white">
            <CategoryHeader name="templates\forms" open line={false} />
            <ul className="pl-5">
              {templates.map((template) => (
                <li
                  key={template}
                  className={`flex h-[19px] items-center border pl-[2px] ${
                    template === "Widget"
                      ? "border-dotted border-[#ff8728] bg-[#0078d7] text-white"
                      : "border-transparent"
                  }`}
                >
                  {template}
                </li>
              ))}
            </ul>
            <CategoryHeader name="窗口部件" open={false} line />
          </div>

          {/* Preview and device options */}
          <div className="ml-[13px] pt-[11px]">
            <div className="ml-1 h-[244px] w-[244px] border border-black shadow-[3px_3px_4px_rgba(0,0,0,0.5)]" />
            <fieldset className="mt-[14px] h-[81px] w-[219px] border border-[#dcdcdc] px-[9px]">
              <legend className="-ml-[3px] px-1 pt-px leading-[18px]">嵌入式设计</legend>
              <div className="flex flex-col gap-[6px] pt-[6px]">
                <div className="flex h-5 items-center">
                  <label htmlFor="device" className="w-[66px]">
                    设备：
                  </label>
                  <div className="relative w-[133px]">
                    <select
                      id="device"
                      disabled
                      className="block h-5 w-full appearance-none border border-[#bfbfbf] bg-[#cccccc] px-[2px] text-[#838383] opacity-100"
                    >
                      <option>无</option>
                    </select>
                    <span className="pointer-events-none absolute top-[5px] right-1">
                      <Chevron direction="down" className="text-[#a5a5a5]" weight={1} />
                    </span>
                  </div>
                </div>
                <div className="flex h-5 items-center">
                  <label htmlFor="screen-size" className="w-[66px]">
                    屏幕大小：
                  </label>
                  <div className="relative w-[133px]">
                    <select
                      id="screen-size"
                      className="block h-5 w-full appearance-none border border-[#adadad] bg-[#e1e1e1] px-[2px]"
                    >
                      <option>默认大小</option>
                    </select>
                    <span className="pointer-events-none absolute top-[5px] right-1">
                      <Chevron direction="down" weight={1} />
                    </span>
                  </div>
                </div>
              </div>
            </fieldset>
          </div>
        </div>

        <hr className="mt-[7px] h-[2px] border-t border-b border-t-[#a0a0a0] border-b-white" />

        <label className="mt-2 flex h-[14px] items-center gap-[5px]">
          <span className="grid">
            <input
              type="checkbox"
              defaultChecked
              className="peer col-start-1 row-start-1 h-[13px] w-[13px] appearance-none border border-[#333333] bg-white"
            />
            <svg
              viewBox="0 0 13 13"
              className="pointer-events-none col-start-1 row-start-1 hidden h-[13px] w-[13px] peer-checked:block"
            >
              <path d="M2.500 6.500l3 3 5-6" fill="none" stroke="#333" strokeWidth="1.300" />
            </svg>
          </span>
          启动时显示这个对话框
        </label>

        <div className="mt-2 flex justify-end gap-2 pr-px">
          <button className="h-[21px] w-[73px] border-2 border-[#0078d7] bg-[#e1e1e1] leading-none">
            创建
            <Mnemonic letter="R" />
          </button>
          <button className="h-[21px] w-[73px] border border-[#adadad] bg-[#e1e1e1] leading-none">
            打开
            <Mnemonic letter="O" suffix="..." />
          </button>
          <button className="flex h-[21px] w-[73px] items-center border border-[#adadad] bg-[#e1e1e1] pr-[5px] pl-[10px] leading-none">
            最近的
            <svg viewBox="0 0 8 4" className="ml-auto h-1 w-2">
              <path d="M0 0h8L4 4z" fill="#000" />
            </svg>
          </button>
          <button className="h-[21px] w-[73px] border border-[#adadad] bg-[#e1e1e1] leading-none">
            关闭
            <Mnemonic letter="C" />
          </button>
        </div>
      </div>
    </div>
  );
}

export default function App() {
  return (
    <div className="flex h-screen flex-col overflow-hidden bg-[#f0f0f0] font-['Noto_Sans','Noto_Sans_CJK_SC',sans-serif] text-[12px] leading-4 text-black">
      <IconDefs />

      {/* Title bar */}
      <header className="flex h-[23px] shrink-0 items-center bg-white pr-[3px] pl-[2px] text-[#999999]">
        <AppIcon />
        <span className="flex-1 pl-[5px]">Qt 设计师 - Qt Designer</span>
        <div className="flex text-[#999999]">
          <button aria-label="Minimize" className="flex w-[45px] justify-center">
            <svg viewBox="0 0 11 11" className="h-[11px] w-[11px]" stroke="currentColor">
              <path d="M.5 5.500h10" />
            </svg>
          </button>
          <button aria-label="Restore" className="flex w-[45px] justify-center">
            <svg viewBox="0 0 11 11" className="h-[11px] w-[11px]" fill="none" stroke="currentColor">
              <path d="M.5 2.500h8v8h-8zM2.500 2.500v-2h8v8h-2" />
            </svg>
          </button>
          <button aria-label="Close" className="flex w-[45px] justify-center">
            <svg viewBox="0 0 11 11" className="h-[11px] w-[11px]" stroke="currentColor">
              <path d="M.5 .5l10 10M10.500 .5l-10 10" />
            </svg>
          </button>
        </div>
      </header>

      {/* Menu bar */}
      <nav className="flex h-[23px] shrink-0 items-center gap-px border-b border-[#f0f0f0] bg-white pt-[2px] text-[#999999]">
        {menus.map((menu) => (
          <button key={menu} className="px-2">
            {menu}
          </button>
        ))}
      </nav>

      {/* Toolbars */}
      <div className="flex h-[34px] shrink-0 border-b border-[#b5b5b5]">
        {toolGroups.map((group, index) => (
          <div
            key={index}
            className={`flex items-center pr-[2px] ${index < 3 ? "border-r border-[#b5b5b5]" : ""}`}
          >
            <span className="flex w-[9px] justify-center">
              <span className="h-[26px] border-l-2 border-dotted border-[#b5b5b5]" />
            </span>
            {group.map((tool) => (
              <button key={tool.label} aria-label={tool.label} className="flex w-[31px] justify-center">
                {tool.icon}
              </button>
            ))}
          </div>
        ))}
      </div>

      {/* Docks and canvas */}
      <div className="flex min-h-0 flex-1 gap-1">
        <WidgetBox />
        <main className="relative min-w-0 flex-1 border border-[#828790] bg-[#a0a0a0]">
          <NewFormDialog />
        </main>
        <RightDocks />
      </div>

      {/* Status bar */}
      <div className="h-[22px] shrink-0" />

      {/* Taskbar */}
      <footer className="flex h-2 shrink-0 items-start justify-between overflow-hidden bg-[#10191c]">
        <div className="flex h-full">
          <span className="ml-[293px] w-12 bg-[#8a4b22]" />
          <span className="ml-[197px] w-12 bg-[#182645]" />
        </div>
        <div className="flex h-full">
          <time className="pt-[2px] pr-[69px] text-white">18:05</time>
          <span className="mr-1 w-px bg-[#6f7677]" />
        </div>
      </footer>
    </div>
  );
}
